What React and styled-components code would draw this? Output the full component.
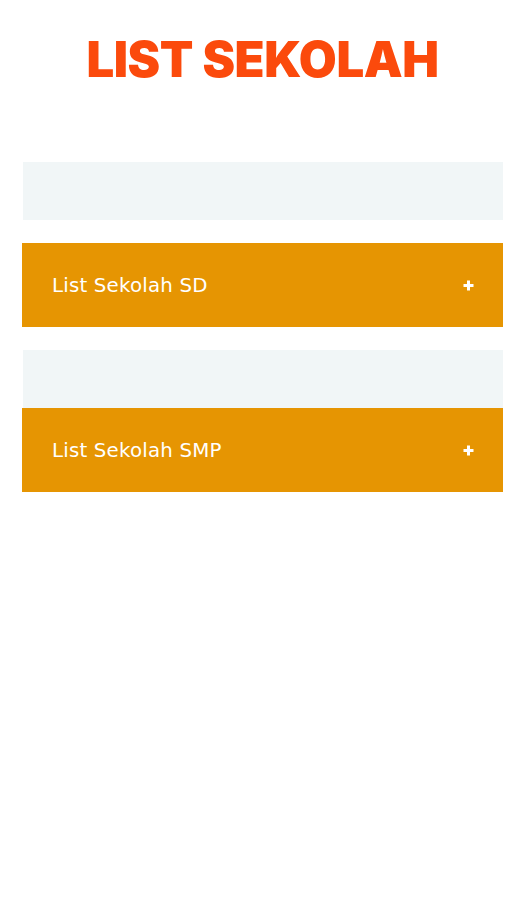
import React from 'react';
import styled, { createGlobalStyle } from 'styled-components';

const GlobalStyle = createGlobalStyle`
    body {
        margin: 0;
        background: #ffffff;
        font-family: "DejaVu Sans", "Liberation Sans", sans-serif;
    }
`

const Page = styled.main`
    width: 526px;
    min-height: 900px;
    padding: 30px 23px 0 22px;
    box-sizing: border-box;
`

const Title = styled.h1`
    margin: 0;
    text-align: center;
    font-family: Inter, "Liberation Sans", sans-serif;
    font-weight: 900;
    font-size: 49px;
    line-height: 60px;
    letter-spacing: -0.4px;
    color: #fb4a0c;
`

const List = styled.section`
    margin-top: 72px;
    display: flex;
    flex-direction: column;
`

const Group = styled.div`
    display: flex;
    flex-direction: column;
    gap: ${props => props.$gap}px;
    margin-bottom: 23px;
`

const Placeholder = styled.div`
    height: 58px;
    margin-left: 1px;
    background: #f1f6f7;
`

const Header = styled.button`
    display: flex;
    align-items: center;
    justify-content: space-between;
    height: 84px;
    padding: 0 29px 0 30px;
    border: none;
    background: #e69502;
    color: #ffffff;
    font-family: "DejaVu Sans", "Liberation Sans", sans-serif;
    font-size: 19.8px;
    font-weight: 400;
    letter-spacing: 0.2px;
    text-align: left;
    cursor: pointer;
`

const Plus = styled.svg`
    width: 11px;
    height: 11px;
    flex-shrink: 0;
`

function Item({ label, gap }) {
    return (
        <Group $gap={gap}>
            <Placeholder />
            <Header>
                {label}
                <Plus viewBox="0 0 11 11">
                    <path d="M5.5 0.5v10M0.5 5.5h10" stroke="#ffffff" strokeWidth="3" />
                </Plus>
            </Header>
        </Group>
    )
}

export default function App() {
    return (
        <>
            <GlobalStyle />
            <Page>
                <Title>LIST SEKOLAH</Title>
                <List>
                    <Item label="List Sekolah SD" gap={23} />
                    <Item label="List Sekolah SMP" gap={0} />
                </List>
            </Page>
        </>
    )
}
